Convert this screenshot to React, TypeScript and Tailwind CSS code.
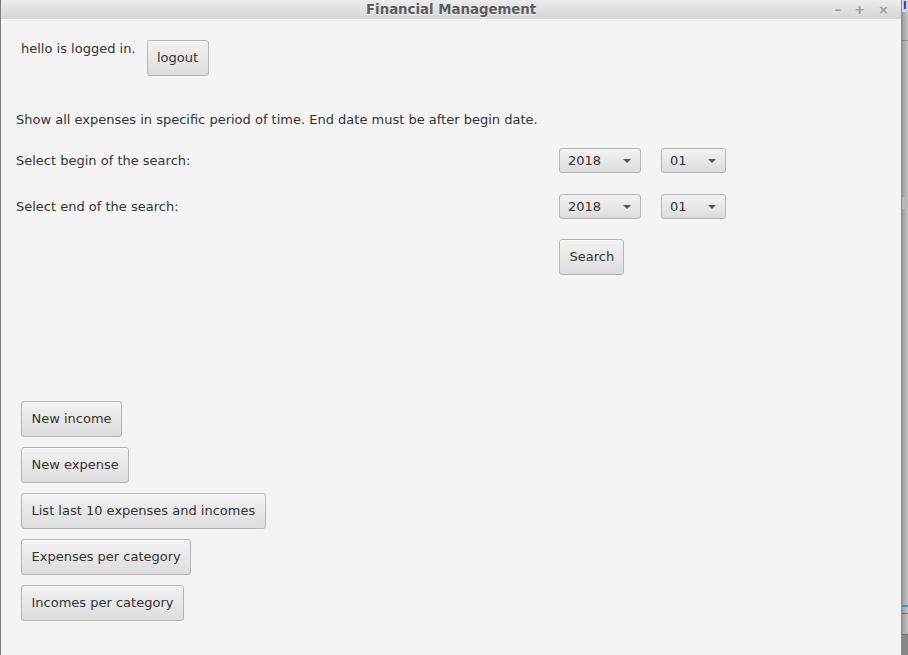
import React from "react";

const font = "font-['DejaVu_Sans','Liberation_Sans',sans-serif]";

function FxButton({ children, className = "" }: { children: React.ReactNode; className?: string }) {
  return (
    <button
      className={`h-[36px] rounded-[3px] border border-[#b5b5b5] bg-gradient-to-b from-[#f3f3f3] to-[#dddddd] px-[9.5px] text-[13px] text-[#333333] shadow-[inset_0_1px_0_#fafafa] ${className}`}
    >
      {children}
    </button>
  );
}

function Combo({ value, width }: { value: string; width: string }) {
  return (
    <div
      className={`flex h-[25px] items-center justify-between rounded-[3px] border border-[#b5b5b5] bg-gradient-to-b from-[#f3f3f3] to-[#dddddd] pl-[8px] pr-[9px] text-[13px] text-[#333333] ${width}`}
    >
      <span>{value}</span>
      <span className="h-0 w-0 border-x-[4px] border-t-[4px] border-x-transparent border-t-[#555555]" />
    </div>
  );
}

export default function App() {
  return (
    <div className={`flex h-[655px] w-[908px] overflow-hidden bg-[#f4f4f4] ${font}`}>
      <div className="flex w-[901px] flex-col border-l border-[#7c7c7c]">
        {/* title bar */}
        <div className="flex h-[19px] items-center bg-gradient-to-b from-[#ececec] to-[#d6d6d6] pl-[365px] pr-[12px]">
          <span className="flex-1 text-[14.8px] font-bold leading-none text-[#5b5b5b] font-['DejaVu_Sans_Condensed','DejaVu_Sans',sans-serif] [text-shadow:0_1px_0_#ffffff]">
            Financial Management
          </span>
          <div className="flex items-center gap-[13px] text-[13px] font-bold leading-none text-[#9a9a9a]">
            <span>–</span>
            <span>+</span>
            <span>×</span>
          </div>
        </div>

        {/* body */}
        <div className="flex flex-1 flex-col bg-[#f4f4f4] text-[13px] text-[#333333]">
          <div className="flex items-start pl-[20px] pt-[21px]">
            <span className="mt-[1px] leading-[16px]">hello is logged in.</span>
            <FxButton className="ml-[11px] w-[62px]">logout</FxButton>
          </div>

          <p className="ml-[15px] mt-[36px] leading-[16px]">
            Show all expenses in specific period of time. End date must be after begin date.
          </p>

          <div className="ml-[15px] mt-[20px] grid grid-cols-[543px_82px_20px_65px] items-center">
            <span>Select begin of the search:</span>
            <Combo value="2018" width="w-[82px]" />
            <span />
            <Combo value="01" width="w-[65px]" />
          </div>

          <div className="ml-[15px] mt-[21px] grid grid-cols-[543px_82px_20px_65px] items-center">
            <span>Select end of the search:</span>
            <Combo value="2018" width="w-[82px]" />
            <span />
            <Combo value="01" width="w-[65px]" />
          </div>

          <div className="ml-[558px] mt-[20px]">
            <FxButton className="w-[65px]">Search</FxButton>
          </div>

          <div className="ml-[20px] mt-[126px] flex flex-col items-start gap-[10px]">
            <FxButton>New income</FxButton>
            <FxButton>New expense</FxButton>
            <FxButton>List last 10 expenses and incomes</FxButton>
            <FxButton>Expenses per category</FxButton>
            <FxButton>Incomes per category</FxButton>
          </div>
        </div>
      </div>

      {/* edge of the window behind */}
      <div className="flex flex-1 flex-col border-l border-[#8a8a8a] bg-gradient-to-r from-[#9c9c9c] to-[#c4c4c4]">
        <div className="h-[12px] bg-[#d8d8d8] pl-[1px] text-[10px] font-bold leading-[12px] text-[#2233cc]">I</div>
        <div className="mt-[28px] h-[1px] bg-[#8c8c8c]" />
        <div className="mt-[156px] h-[12px] bg-[#b4b8c0]" />
        <div className="flex-1" />
        <div className="h-[2px] bg-[#3399dd]" />
        <div className="mt-[6px] h-[1px] bg-[#707070]" />
        <div className="mt-[20px] h-[1px] bg-[#707070]" />
        <div className="h-[20px] bg-[#888888]" />
      </div>
    </div>
  );
}
